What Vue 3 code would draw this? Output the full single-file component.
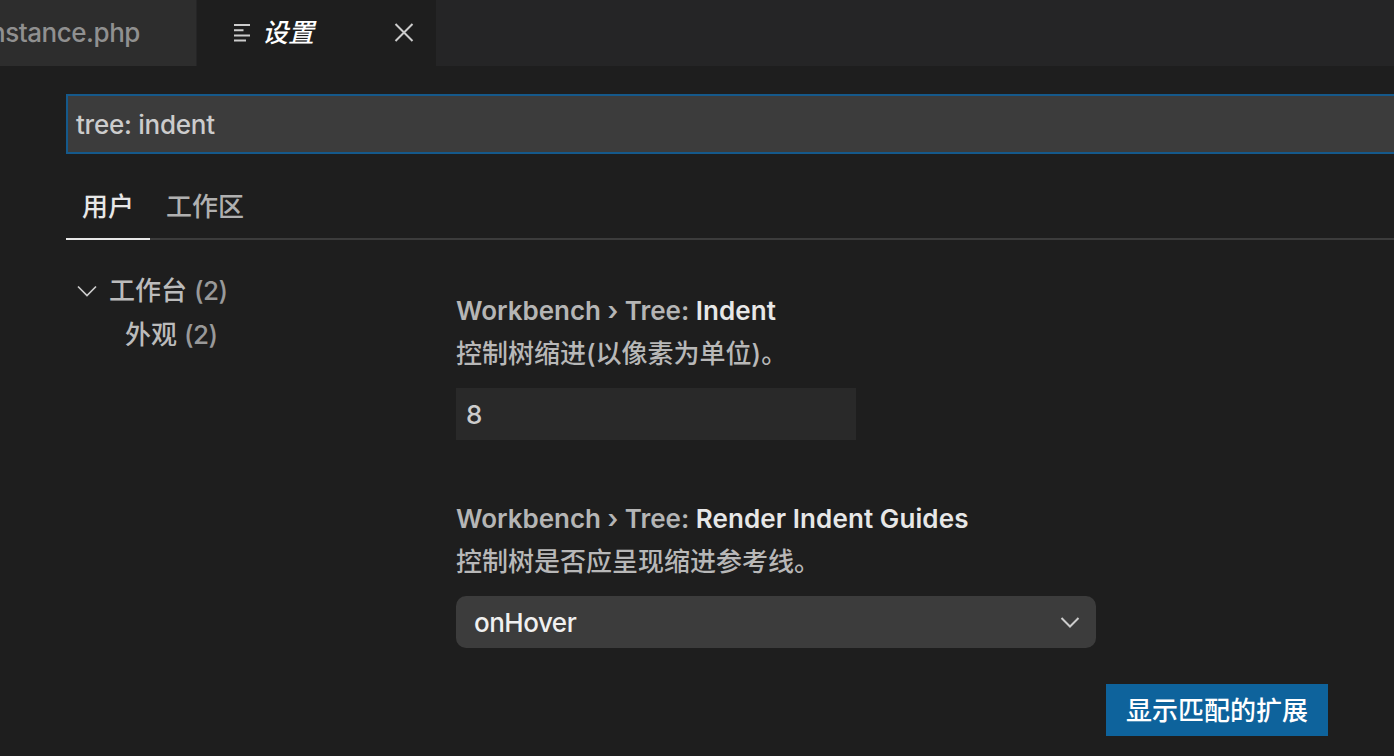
<script setup>
const settings = [
  { name: 'Indent', desc: '控制树缩进(以像素为单位)。', kind: 'number', value: '8' },
  { name: 'Render Indent Guides', desc: '控制树是否应呈现缩进参考线。', kind: 'select', value: 'onHover' },
]
</script>

<template>
  <div class="window">
    <header class="tabs">
      <div class="tab prev"><span class="prev-name">nstance.php</span></div>
      <div class="tab current">
        <svg class="list" width="18" height="20" viewBox="0 0 18 20"><path d="M1 2h16M1 7.2h9.5M1 12.4h16M1 17.6h12" /></svg>
        <span class="title">设置</span>
        <svg class="close" width="20" height="20" viewBox="0 0 20 20"><path d="M1.5 1l17 17M18.5 1L1.5 18" /></svg>
      </div>
    </header>
    <div class="search"><span>tree: indent</span></div>
    <nav class="scopes"><div class="scope active">用户</div><div class="scope">工作区</div></nav>
    <main class="body">
      <aside class="toc">
        <div class="row">
          <svg class="twisty" width="22" height="14" viewBox="0 0 22 14"><path d="M2 2.5l9 9 9-9" /></svg>
          <span class="label">工作台 <span class="count">(2)</span></span>
        </div>
        <div class="row child"><span class="label">外观 <span class="count">(2)</span></span></div>
      </aside>
      <section class="settings">
        <article v-for="s in settings" :key="s.name" class="setting">
          <h3><span class="cat">Workbench › Tree: </span><span class="name">{{ s.name }}</span></h3>
          <p>{{ s.desc }}</p>
          <div :class="s.kind">
            <span>{{ s.value }}</span>
            <svg v-if="s.kind === 'select'" width="20" height="14" viewBox="0 0 20 14"><path d="M1.5 2l8.5 8.5L18.5 2" /></svg>
          </div>
        </article>
      </section>
    </main>
    <button class="extensions">显示匹配的扩展</button>
  </div>
</template>

<style>
body { background: #1e1e1e; }
</style>

<style scoped>
.window { position: relative; width: 1394px; height: 756px; overflow: hidden; background: #1e1e1e; color: #ccc; font: 450 26px/44px Inter, "Noto Sans CJK SC", sans-serif; letter-spacing: -0.25px; box-sizing: border-box; }
.window * { box-sizing: border-box; }
svg { fill: none; stroke: #ccc; stroke-width: 2; flex: none; }
.tabs { display: flex; height: 66px; background: #252526; }
.tab { display: flex; align-items: center; }
.prev { width: 197px; background: #2d2d2d; color: #909090; justify-content: flex-end; padding-right: 56px; white-space: nowrap; border-right: 1px solid #252526; letter-spacing: -0.45px; }
.current { width: 239px; background: #1e1e1e; padding-left: 36px; }
.title { color: #fff; font-style: italic; font-weight: 500; margin-left: 11px; width: 132px; flex: none; letter-spacing: 0; }
.search { margin: 28px 0 0 66px; height: 60px; border: 2px solid #15598b; border-right: 0; background: #3c3c3c; padding-left: 8px; line-height: 58px; }
.scopes { display: flex; margin: 20px 0 0 66px; height: 66px; border-bottom: 2px solid #3c3c3c; letter-spacing: 0; }
.scope { height: 66px; padding: 0 16px; line-height: 66px; color: #b0b0b0; }
.scope.active { width: 84px; color: #e7e7e7; border-bottom: 2px solid #e7e7e7; }
.body { display: flex; padding-left: 66px; }
.toc { width: 390px; padding-top: 29px; color: #bbb; letter-spacing: 0; }
.row { display: flex; align-items: center; height: 44px; padding-left: 10px; }
.row .label { margin-left: 11px; }
.row.child .label { margin-left: 49px; }
.twisty { stroke-width: 1.7; }
.count { color: #999; letter-spacing: -0.5px; }
.settings { width: 640px; padding-top: 50px; }
.setting { height: 208px; }
h3, p { margin: 0; font-size: 26px; white-space: nowrap; line-height: 42px; }
h3 { font-weight: 600; }
.cat { color: #b5b5b5; letter-spacing: -0.02px; }
.name { color: #e7e7e7; letter-spacing: 0.1px; }
p { font-weight: 450; color: #b8b8b8; letter-spacing: 0; padding-top: 1px; margin-bottom: -1px; }
.number { width: 400px; height: 52px; margin-top: 14px; padding-left: 10px; background: #292929; line-height: 54px; }
.select { display: flex; align-items: center; justify-content: space-between; height: 52px; margin-top: 14px; padding: 1px 16px 0 18px; border-radius: 10px; background: #3c3c3c; color: #f0f0f0; letter-spacing: -0.5px; }
.extensions { position: absolute; left: 1106px; top: 684px; width: 222px; height: 52px; padding: 2px 0 0; border: 0; background: #0e639c; color: #fff; font: inherit; letter-spacing: 0; }
</style>
